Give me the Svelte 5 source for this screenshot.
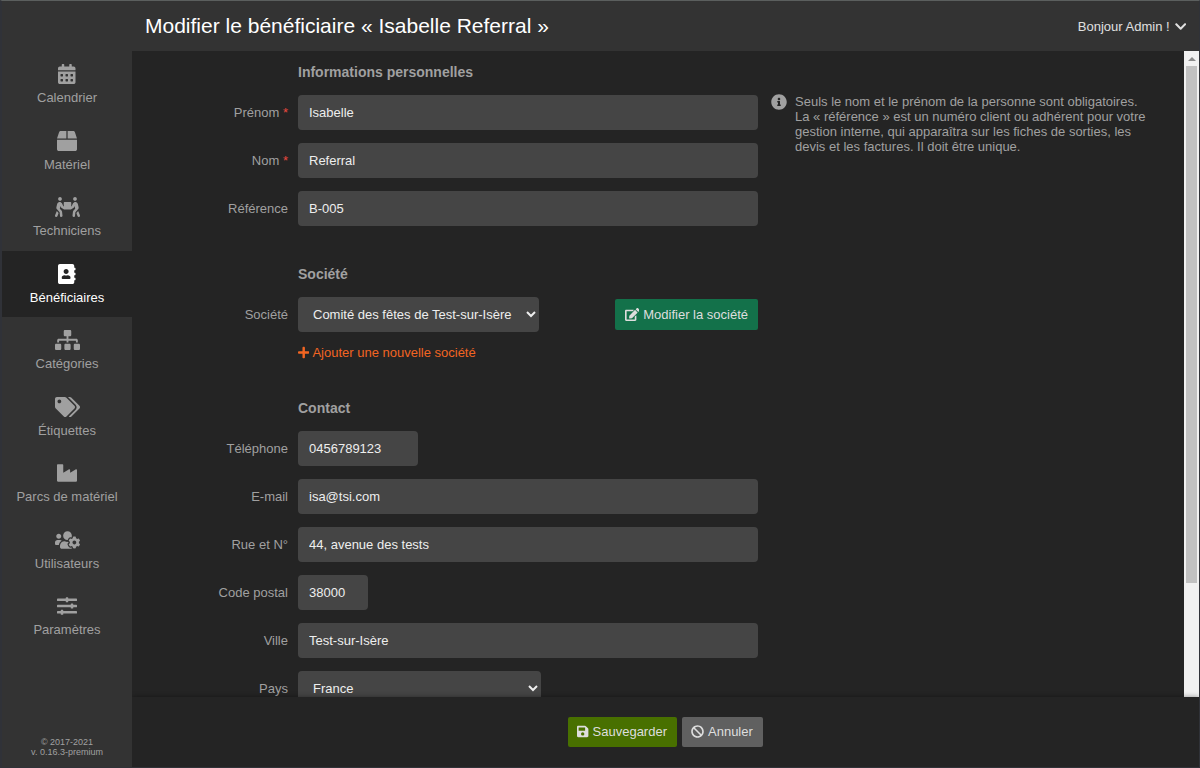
<script lang="ts">
  interface Icon {
    readonly w: number;
    readonly d: string;
  }

  const icons: Record<string, Icon> = {
    calendar: {
      w: 448,
      d: "M0 464c0 26.5 21.5 48 48 48h352c26.5 0 48-21.5 48-48V192H0v272zm320-196c0-6.6 5.4-12 12-12h40c6.6 0 12 5.4 12 12v40c0 6.6-5.4 12-12 12h-40c-6.6 0-12-5.4-12-12v-40zm0 128c0-6.6 5.4-12 12-12h40c6.6 0 12 5.4 12 12v40c0 6.6-5.4 12-12 12h-40c-6.6 0-12-5.4-12-12v-40zM192 268c0-6.6 5.4-12 12-12h40c6.6 0 12 5.4 12 12v40c0 6.6-5.4 12-12 12h-40c-6.6 0-12-5.4-12-12v-40zm0 128c0-6.6 5.4-12 12-12h40c6.6 0 12 5.4 12 12v40c0 6.6-5.4 12-12 12h-40c-6.6 0-12-5.4-12-12v-40zM64 268c0-6.6 5.4-12 12-12h40c6.6 0 12 5.4 12 12v40c0 6.6-5.4 12-12 12H76c-6.6 0-12-5.4-12-12v-40zm0 128c0-6.6 5.4-12 12-12h40c6.6 0 12 5.4 12 12v40c0 6.6-5.4 12-12 12H76c-6.6 0-12-5.4-12-12v-40zM400 64h-48V16c0-8.8-7.2-16-16-16h-32c-8.8 0-16 7.2-16 16v48H160V16c0-8.8-7.2-16-16-16h-32c-8.8 0-16 7.2-16 16v48H48C21.5 64 0 85.5 0 112v48h448v-48c0-26.5-21.5-48-48-48z",
    },
    box: {
      w: 512,
      d: "M509.5 184.6L458.9 32.8C452.4 13.2 434.1 0 413.4 0H272v192h238.7c-.4-2.5-.4-5-1.2-7.4zM240 0H98.6c-20.7 0-39 13.2-45.5 32.8L2.5 184.6c-.8 2.4-.8 4.9-1.2 7.4H240V0zM0 224v240c0 26.5 21.5 48 48 48h416c26.5 0 48-21.5 48-48V224H0z",
    },
    people: {
      w: 640,
      d: "M128 96c26.5 0 48-21.5 48-48S154.5 0 128 0 80 21.5 80 48s21.5 48 48 48zm384 0c26.5 0 48-21.5 48-48S538.5 0 512 0s-48 21.5-48 48 21.5 48 48 48zm125.7 372.1l-44-110-41.1 46.4-2 18.2 27.7 69.2c5 12.5 17 20.1 29.7 20.1 4 0 8-.7 11.9-2.3 16.4-6.6 24.4-25.2 17.8-41.6zm-34.2-209.8L585 178.1c-4.6-20-18.6-36.8-37.5-44.9-18.5-8-39-6.7-56.1 3.3-22.7 13.4-39.7 34.5-48.1 59.4L432 229.8 416 240v-96c0-8.8-7.2-16-16-16H240c-8.8 0-16 7.2-16 16v96l-16.1-10.2-11.3-33.9c-8.3-25-25.4-46-48.1-59.4-17.2-10-37.6-11.3-56.1-3.3-18.9 8.1-32.9 24.9-37.5 44.9l-18.4 80.2c-4.6 20 .7 41.2 14.4 56.7l67.2 75.9 10.1 92.6C130 499.8 143.8 512 160 512c1.2 0 2.3-.1 3.5-.2 17.6-1.9 30.2-17.7 28.3-35.3l-10.1-92.8c-1.5-13-6.9-25.1-15.6-35l-43.3-49 17.6-70.3 6.8 20.4c4.1 12.5 11.9 23.4 24.5 32.6l51.1 32.5c4.6 2.9 12.1 4.6 17.2 5h160c5.1-.4 12.6-2.1 17.2-5l51.1-32.5c12.6-9.2 20.4-20 24.5-32.6l6.8-20.4 17.6 70.3-43.3 49c-8.7 9.9-14.1 22-15.6 35l-10.1 92.8c-1.9 17.6 10.8 33.4 28.3 35.3 1.2.1 2.3.2 3.5.2 16.1 0 30-12.1 31.8-28.5l10.1-92.6 67.2-75.9c13.6-15.5 19-36.7 14.4-56.7zM46.3 358.1l-44 110c-6.6 16.4 1.4 35 17.8 41.6 16.8 6.6 35.1-1.7 41.6-17.8l27.7-69.2-2-18.2-41.1-46.4z",
    },
    addressBook: {
      w: 448,
      d: "M436 160c6.6 0 12-5.4 12-12v-40c0-6.6-5.4-12-12-12h-20V48c0-26.5-21.5-48-48-48H48C21.5 0 0 21.5 0 48v416c0 26.5 21.5 48 48 48h320c26.5 0 48-21.5 48-48v-48h20c6.6 0 12-5.4 12-12v-40c0-6.6-5.4-12-12-12h-20v-64h20c6.6 0 12-5.4 12-12v-40c0-6.6-5.4-12-12-12h-20v-64h20zm-228-32c35.3 0 64 28.7 64 64s-28.7 64-64 64-64-28.7-64-64 28.7-64 64-64zm112 236.8c0 10.6-10 19.2-22.4 19.2H118.4C106 384 96 375.4 96 364.8v-19.2c0-31.8 30.1-57.6 67.2-57.6h5c12.3 5.1 25.7 8 39.8 8s27.6-2.9 39.8-8h5c37.1 0 67.2 25.8 67.2 57.6v19.2z",
    },
    sitemap: {
      w: 640,
      d: "M128 352H32c-17.67 0-32 14.33-32 32v96c0 17.67 14.33 32 32 32h96c17.67 0 32-14.33 32-32v-96c0-17.67-14.33-32-32-32zm-24-80h192v48h48v-48h192v48h48v-57.59c0-21.17-17.23-38.41-38.41-38.41H344v-64h40c17.67 0 32-14.33 32-32V32c0-17.67-14.33-32-32-32H256c-17.67 0-32 14.33-32 32v96c0 17.67 14.33 32 32 32h40v64H94.41C73.23 224 56 241.23 56 262.41V320h48v-48zm264 80h-96c-17.67 0-32 14.33-32 32v96c0 17.67 14.33 32 32 32h96c17.67 0 32-14.33 32-32v-96c0-17.67-14.33-32-32-32zm240 0h-96c-17.67 0-32 14.33-32 32v96c0 17.67 14.33 32 32 32h96c17.67 0 32-14.33 32-32v-96c0-17.67-14.33-32-32-32z",
    },
    tags: {
      w: 640,
      d: "M497.941 225.941L286.059 14.059A48 48 0 0 0 252.118 0H48C21.49 0 0 21.49 0 48v204.118a48 48 0 0 0 14.059 33.941l211.882 211.882c18.744 18.745 49.136 18.746 67.882 0l204.118-204.118c18.745-18.745 18.745-49.137 0-67.882zM112 160c-26.51 0-48-21.49-48-48s21.49-48 48-48 48 21.49 48 48-21.49 48-48 48zm513.941 133.823L421.823 497.941c-18.745 18.745-49.137 18.745-67.882 0l-.36-.36L527.64 323.522c16.999-16.999 26.36-39.6 26.36-63.64s-9.362-46.641-26.36-63.64L331.397 0h48.721a48 48 0 0 1 33.941 14.059l211.882 211.882c18.745 18.745 18.745 49.137 0 67.882z",
    },
    industry: {
      w: 512,
      d: "M475.115 163.781L336 252.309v-68.28c0-18.916-20.931-30.399-36.885-20.248L160 252.309V56c0-13.255-10.745-24-24-24H24C10.745 32 0 42.745 0 56v400c0 13.255 10.745 24 24 24h464c13.255 0 24-10.745 24-24V184.029c0-18.917-20.931-30.399-36.885-20.248z",
    },
    usersCog: {
      w: 640,
      d: "M610.5 341.3c2.6-14.1 2.6-28.5 0-42.6l25.8-14.9c3-1.7 4.3-5.2 3.3-8.5-6.7-21.6-18.2-41.2-33.2-57.4-2.3-2.5-6-3.1-9-1.4l-25.8 14.9c-10.9-9.3-23.4-16.5-36.9-21.3v-29.8c0-3.4-2.4-6.4-5.7-7.1-22.3-5-45-4.8-66.2 0-3.3.7-5.7 3.7-5.7 7.1v29.8c-13.5 4.8-26 12-36.9 21.3l-25.8-14.9c-2.9-1.7-6.7-1.1-9 1.4-15 16.2-26.5 35.8-33.2 57.4-1 3.3.4 6.8 3.3 8.5l25.8 14.9c-2.6 14.1-2.6 28.5 0 42.6l-25.8 14.9c-3 1.7-4.3 5.2-3.3 8.5 6.7 21.6 18.2 41.1 33.2 57.4 2.3 2.5 6 3.1 9 1.4l25.8-14.9c10.9 9.3 23.4 16.5 36.9 21.3v29.8c0 3.4 2.4 6.4 5.7 7.1 22.3 5 45 4.8 66.2 0 3.3-.7 5.7-3.7 5.7-7.1v-29.8c13.5-4.8 26-12 36.9-21.3l25.8 14.9c2.9 1.7 6.7 1.1 9-1.4 15-16.2 26.5-35.8 33.2-57.4 1-3.3-.4-6.8-3.3-8.5l-25.8-14.9zM496 368.5c-26.8 0-48.5-21.8-48.5-48.5s21.8-48.5 48.5-48.5 48.5 21.8 48.5 48.5-21.7 48.5-48.5 48.5zM96 224c35.3 0 64-28.7 64-64s-28.7-64-64-64-64 28.7-64 64 28.7 64 64 64zm224 32c1.9 0 3.7-.5 5.6-.6 8.3-21.7 20.5-42.1 36.3-59.2 7.4-8 17.9-12.6 28.9-12.6 6.9 0 13.7 1.8 19.6 5.3l7.9 4.6c.8-.5 1.6-.9 2.4-1.4 7-14.6 11.2-30.8 11.2-48 0-61.9-50.1-112-112-112S208 82.1 208 144c0 61.9 50.1 112 112 112zm105.2 194.5c-2.3-1.2-4.6-2.6-6.8-3.9-8.2 4.8-15.3 9.8-27.5 9.8-10.9 0-21.4-4.6-28.9-12.6-18.3-19.8-32.3-43.9-40.2-69.6-10.7-34.5 24.9-49.7 25.8-50.3-.1-2.6-.1-5.2 0-7.8l-7.9-4.6c-3.8-2.2-7-5-9.8-8.1-3.3.2-6.5.6-9.8.6-24.6 0-47.6-6-68.5-16h-8.3C179.6 288 128 339.6 128 403.2V432c0 26.5 21.5 48 48 48h255.4c-3.7-6-6.2-12.8-6.2-20.3v-9.2zM173.1 274.6C161.5 263.1 145.6 256 128 256H64c-35.3 0-64 28.7-64 64v32c0 17.7 14.3 32 32 32h65.9c6.3-47.4 34.9-87.3 75.2-109.4z",
    },
    sliders: {
      w: 512,
      d: "M496 384H160v-16c0-8.8-7.2-16-16-16h-32c-8.8 0-16 7.2-16 16v16H16c-8.8 0-16 7.2-16 16v32c0 8.8 7.2 16 16 16h80v16c0 8.8 7.2 16 16 16h32c8.8 0 16-7.2 16-16v-16h336c8.8 0 16-7.2 16-16v-32c0-8.8-7.2-16-16-16zm0-160h-80v-16c0-8.8-7.2-16-16-16h-32c-8.8 0-16 7.2-16 16v16H16c-8.8 0-16 7.2-16 16v32c0 8.8 7.2 16 16 16h336v16c0 8.8 7.2 16 16 16h32c8.8 0 16-7.2 16-16v-16h80c8.8 0 16-7.2 16-16v-32c0-8.8-7.2-16-16-16zm0-160H288V48c0-8.8-7.2-16-16-16h-32c-8.8 0-16 7.2-16 16v16H16C7.2 64 0 71.2 0 80v32c0 8.8 7.2 16 16 16h208v16c0 8.8 7.2 16 16 16h32c8.8 0 16-7.2 16-16v-16h208c8.8 0 16-7.2 16-16V80c0-8.8-7.2-16-16-16z",
    },
    edit: {
      w: 576,
      d: "M402.6 83.2l90.2 90.2c3.8 3.8 3.8 10 0 13.8L274.4 405.6l-92.8 10.3c-12.4 1.4-22.9-9.1-21.5-21.5l10.3-92.8L388.8 83.2c3.8-3.8 10-3.8 13.8 0zm162-22.9l-48.8-48.8c-15.2-15.2-39.9-15.2-55.2 0l-35.4 35.4c-3.8 3.8-3.8 10 0 13.8l90.2 90.2c3.8 3.8 10 3.8 13.8 0l35.4-35.4c15.2-15.3 15.2-40 0-55.2zM384 346.2V448H64V128h229.8c3.2 0 6.2-1.3 8.5-3.5l40-40c7.6-7.6 2.2-20.5-8.5-20.5H48C21.5 64 0 85.5 0 112v352c0 26.5 21.5 48 48 48h352c26.5 0 48-21.5 48-48V306.2c0-10.7-12.9-16-20.5-8.5l-40 40c-2.2 2.3-3.5 5.3-3.5 8.5z",
    },
    plus: {
      w: 448,
      d: "M416 208H272V64c0-17.67-14.33-32-32-32h-32c-17.67 0-32 14.33-32 32v144H32c-17.67 0-32 14.33-32 32v32c0 17.67 14.33 32 32 32h144v144c0 17.67 14.33 32 32 32h32c17.67 0 32-14.33 32-32V304h144c17.67 0 32-14.33 32-32v-32c0-17.67-14.33-32-32-32z",
    },
    save: {
      w: 448,
      d: "M433.941 129.941l-83.882-83.882A48 48 0 0 0 316.118 32H48C21.49 32 0 53.49 0 80v352c0 26.51 21.49 48 48 48h352c26.51 0 48-21.49 48-48V163.882a48 48 0 0 0-14.059-33.941zM224 416c-35.346 0-64-28.654-64-64 0-35.346 28.654-64 64-64s64 28.654 64 64c0 35.346-28.654 64-64 64zm96-304.52V212c0 6.627-5.373 12-12 12H76c-6.627 0-12-5.373-12-12V108c0-6.627 5.373-12 12-12h228.52c3.183 0 6.235 1.264 8.485 3.515l3.48 3.48A11.996 11.996 0 0 1 320 111.48z",
    },
    ban: {
      w: 512,
      d: "M256 8C119.034 8 8 119.033 8 256s111.034 248 248 248 248-111.034 248-248S392.967 8 256 8zm130.108 117.892c65.448 65.448 70 165.481 20.677 235.637L150.47 105.216c70.204-49.356 170.226-44.735 235.638 20.676zM125.892 386.108c-65.448-65.448-70-165.481-20.677-235.637L361.53 406.784c-70.203 49.356-170.226 44.736-235.638-20.676z",
    },
    info: {
      w: 512,
      d: "M256 8C119.043 8 8 119.083 8 256c0 136.997 111.043 248 248 248s248-111.003 248-248C504 119.083 392.957 8 256 8zm0 110c23.196 0 42 18.804 42 42s-18.804 42-42 42-42-18.804-42-42 18.804-42 42-42zm56 254c0 6.627-5.373 12-12 12h-88c-6.627 0-12-5.373-12-12v-24c0-6.627 5.373-12 12-12h12v-64h-12c-6.627 0-12-5.373-12-12v-24c0-6.627 5.373-12 12-12h64c6.627 0 12 5.373 12 12v100h12c6.627 0 12 5.373 12 12v24z",
    },
    chevron: {
      w: 448,
      d: "M207.029 381.476L12.686 187.132c-9.373-9.373-9.373-24.569 0-33.941l22.667-22.667c9.357-9.357 24.522-9.375 33.901-.04L224 284.505l154.745-154.021c9.379-9.335 24.544-9.317 33.901.04l22.667 22.667c9.373 9.373 9.373 24.569 0 33.941L240.971 381.476c-9.373 9.372-24.569 9.372-33.942 0z",
    },
  };

  const menu = [
    { id: "calendar", icon: "calendar", label: "Calendrier" },
    { id: "materials", icon: "box", label: "Matériel" },
    { id: "technicians", icon: "people", label: "Techniciens" },
    { id: "beneficiaries", icon: "addressBook", label: "Bénéficiaires" },
    { id: "categories", icon: "sitemap", label: "Catégories" },
    { id: "tags", icon: "tags", label: "Étiquettes" },
    { id: "parks", icon: "industry", label: "Parcs de matériel" },
    { id: "users", icon: "usersCog", label: "Utilisateurs" },
    { id: "settings", icon: "sliders", label: "Paramètres" },
  ];
  const current = "beneficiaries";

  const person = $state({
    firstName: "Isabelle",
    lastName: "Referral",
    reference: "B-005",
    company: "Comité des fêtes de Test-sur-Isère",
    phone: "0456789123",
    email: "isa@tsi.com",
    street: "44, avenue des tests",
    postalCode: "38000",
    locality: "Test-sur-Isère",
    country: "France",
  });

  type Key = keyof typeof person;

  interface Field {
    readonly key: Key;
    readonly label: string;
    readonly type?: string;
    readonly required?: boolean;
    readonly size?: string;
  }

  const identity: Field[] = [
    { key: "firstName", label: "Prénom", required: true },
    { key: "lastName", label: "Nom", required: true },
    { key: "reference", label: "Référence" },
  ];

  const contact: Field[] = [
    { key: "phone", label: "Téléphone", type: "tel", size: "medium" },
    { key: "email", label: "E-mail", type: "email" },
    { key: "street", label: "Rue et N°" },
    { key: "postalCode", label: "Code postal", size: "small" },
    { key: "locality", label: "Ville" },
  ];
</script>

{#snippet icon(name: string)}
  <svg class="icon" viewBox="0 0 {icons[name].w} 512" aria-hidden="true">
    <path d={icons[name].d} />
  </svg>
{/snippet}

{#snippet textField(field: Field)}
  <div class="row">
    <label class="label" for={field.key}>
      {field.label}{#if field.required}&nbsp;<span class="required">*</span>{/if}
    </label>
    <input
      id={field.key}
      class="control {field.size ?? ''}"
      type={field.type ?? "text"}
      autocomplete="off"
      required={field.required}
      bind:value={person[field.key]}
    />
  </div>
{/snippet}

<div class="app">
  <header class="header">
    <h1 class="title">Modifier le bénéficiaire « Isabelle Referral »</h1>
    <button type="button" class="user-menu">
      Bonjour Admin ! {@render icon("chevron")}
    </button>
  </header>

  <div class="body">
    <aside class="sidebar">
      <nav>
        {#each menu as item (item.id)}
          <a class="menu-item" class:active={item.id === current} href="#{item.id}">
            {@render icon(item.icon)}
            <span>{item.label}</span>
          </a>
        {/each}
      </nav>
      <div class="version">© 2017-2021<br />v. 0.16.3-premium</div>
    </aside>

    <main class="main">
      <div class="scroll-area">
        <form id="person-form" class="form" onsubmit={(e) => e.preventDefault()}>
          <div class="fields">
            <section class="section">
              <h2 class="section-title">Informations personnelles</h2>
              {#each identity as field (field.key)}
                {@render textField(field)}
              {/each}
            </section>

            <section class="section">
              <h2 class="section-title">Société</h2>
              <div class="row">
                <label class="label" for="company">Société</label>
                <div class="company">
                  <select id="company" class="control company-select" bind:value={person.company}>
                    <option>Comité des fêtes de Test-sur-Isère</option>
                  </select>
                  <button type="button" class="button info">
                    {@render icon("edit")} Modifier la société
                  </button>
                </div>
              </div>
              <a class="add-link" href="#new-company">
                {@render icon("plus")} Ajouter une nouvelle société
              </a>
            </section>

            <section class="section">
              <h2 class="section-title">Contact</h2>
              {#each contact as field (field.key)}
                {@render textField(field)}
              {/each}
              <div class="row">
                <label class="label" for="country">Pays</label>
                <select id="country" class="control country-select" bind:value={person.country}>
                  <option>France</option>
                  <option>Belgique</option>
                  <option>Suisse</option>
                </select>
              </div>
            </section>
          </div>

          <div class="help">
            {@render icon("info")}
            <p>
              Seuls le nom et le prénom de la personne sont obligatoires.<br />
              La « référence » est un numéro client ou adhérent pour votre gestion interne, qui
              apparaîtra sur les fiches de sorties, les devis et les factures. Il doit être unique.
            </p>
          </div>
        </form>
        <div class="scrollbar" aria-hidden="true">
          <div class="scroll-arrow"></div>
          <div class="scroll-thumb"></div>
        </div>
      </div>

      <footer class="actions">
        <button type="submit" form="person-form" class="button success">
          {@render icon("save")} Sauvegarder
        </button>
        <button type="button" class="button">{@render icon("ban")} Annuler</button>
      </footer>
    </main>
  </div>
</div>

<style>
  :global(body) {
    background: #242424;
  }

  .app {
    display: flex;
    flex-direction: column;
    box-sizing: border-box;
    height: 100vh;
    border: 1px solid #303238;
    border-top-color: #5b5f5e;
    border-left-width: 2px;
    background: #242424;
    color: #a0a0a0;
    font-family: "Liberation Sans", Arial, sans-serif;
    font-size: 13px;
    line-height: 15px;
  }

  .icon {
    height: 13px;
    fill: currentColor;
    flex-shrink: 0;
  }

  .header {
    display: flex;
    align-items: center;
    justify-content: space-between;
    flex-shrink: 0;
    height: 50px;
    padding: 0 13px 0 143px;
    background: #333;
  }

  .title {
    margin: 0;
    color: #fff;
    font-size: 21px;
    font-weight: 400;
    line-height: 24px;
  }

  .user-menu {
    display: flex;
    align-items: center;
    gap: 5px;
    padding: 0;
    border: 0;
    background: none;
    color: #e0e0e0;
    font: inherit;
    cursor: pointer;
  }

  .body {
    display: flex;
    flex: 1;
    min-height: 0;
  }

  .sidebar {
    display: flex;
    flex-direction: column;
    justify-content: space-between;
    flex-shrink: 0;
    width: 130px;
    background: #333;
  }

  .menu-item {
    display: flex;
    flex-direction: column;
    align-items: center;
    gap: 4px;
    padding: 13px 0 10px;
    color: #a0a0a0;
    line-height: 1.5;
    text-decoration: none;
  }

  .menu-item .icon {
    height: 20px;
  }

  .menu-item.active {
    background: #242424;
    color: #fff;
  }

  .version {
    padding-bottom: 10px;
    font-size: 9px;
    line-height: 10px;
    text-align: center;
  }

  .main {
    display: flex;
    flex-direction: column;
    flex: 1;
    min-width: 0;
    overflow: hidden;
  }

  .scroll-area {
    display: flex;
    flex: 1;
    min-height: 0;
  }

  .form {
    display: flex;
    align-items: flex-start;
    flex: 1;
    gap: 13px;
    padding: 13px 30px 0 0;
    overflow-y: auto;
    scrollbar-width: none;
  }

  .fields {
    flex: 0 1 626px;
    min-width: 0;
  }

  .section {
    padding-bottom: 27px;
  }

  .section-title {
    margin: 0 0 15px 166px;
    font-size: 14px;
    line-height: 16px;
  }

  .row {
    display: flex;
    align-items: center;
    gap: 10px;
    margin-bottom: 13px;
  }

  .label {
    flex: 0 0 156px;
    text-align: right;
  }

  .required {
    color: #e8483f;
  }

  .control {
    flex: 1;
    box-sizing: border-box;
    min-width: 0;
    height: 35px;
    padding: 0 11px;
    border: 0;
    border-radius: 4px;
    background-color: #454545;
    color: #eee;
    font: inherit;
  }

  .medium {
    flex: 0 0 120px;
  }

  .small {
    flex: 0 0 70px;
  }

  .company {
    display: flex;
    align-items: center;
    justify-content: space-between;
    flex: 1;
  }

  .company-select {
    flex: 0 1 241px;
  }

  .country-select {
    flex: 0 1 243px;
  }

  .add-link {
    display: inline-flex;
    align-items: center;
    gap: 3px;
    margin: 0 0 13px 166px;
    color: #f26522;
    text-decoration: none;
  }

  .help {
    display: flex;
    flex: 1;
    gap: 8px;
    max-width: 376px;
    padding-top: 30px;
  }

  .help .icon {
    height: 16px;
  }

  .help p {
    margin: 0;
  }

  .scrollbar {
    flex: 0 0 15px;
    background: #f1f1f1;
  }

  .scroll-arrow {
    display: flex;
    align-items: center;
    justify-content: center;
    height: 15px;
  }

  .scroll-arrow::before {
    content: "";
    border: 4px solid transparent;
    border-top: 0;
    border-bottom-color: #8b8b8b;
  }

  .scroll-thumb {
    height: 80%;
    margin: 0 2px;
    background: #c1c1c1;
  }

  .actions {
    display: flex;
    align-items: center;
    justify-content: center;
    flex-shrink: 0;
    gap: 5px;
    height: 70px;
    background: #242424;
    box-shadow: 0 0 5px rgba(0, 0, 0, 0.4);
    z-index: 1;
  }

  .button {
    display: flex;
    align-items: center;
    gap: 4px;
    height: 30px;
    padding: 0 10px 1px 9px;
    border: 0;
    border-radius: 2px;
    background: #606060;
    color: #dedede;
    font: inherit;
    cursor: pointer;
  }

  .button.info {
    height: 31px;
    padding: 0 10px;
    background: #13714a;
  }

  .button.success {
    background: #487000;
  }
</style>
